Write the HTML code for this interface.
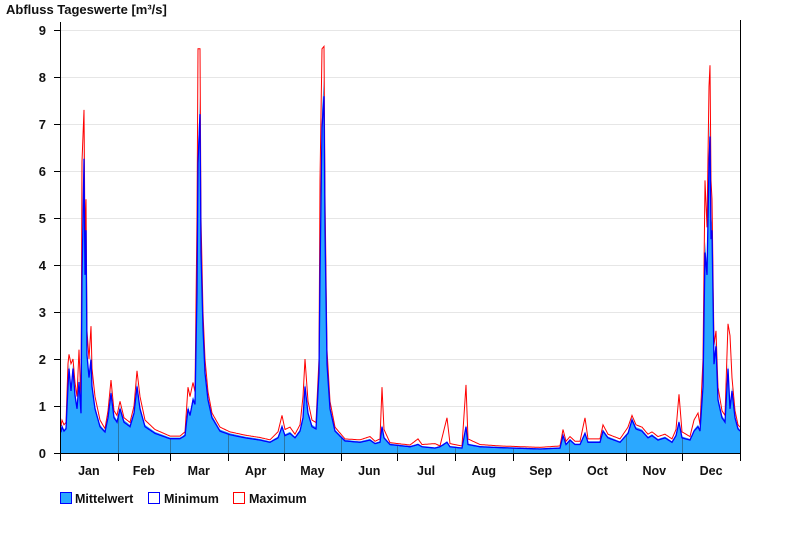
<!DOCTYPE html>
<html><head><meta charset="utf-8"><style>
html,body{margin:0;padding:0;background:#fff;width:800px;height:550px;overflow:hidden}
svg{display:block}
text{font-family:"Liberation Sans",Arial,sans-serif;font-weight:bold;fill:#111}
</style></head><body>
<svg id="s" width="800" height="550" xmlns="http://www.w3.org/2000/svg">
<text x="6" y="14" font-size="13">Abfluss Tageswerte [m³/s]</text>
<g id="grid"></g>
<path id="fill" fill="#2ba8ff" stroke="none"/>
<g id="mlines"></g>
<path id="mx" fill="none" stroke="#ff0000" stroke-width="1"/>
<path id="mn" fill="none" stroke="#0000ff" stroke-width="1.3"/>
<line x1="60.5" y1="22" x2="60.5" y2="461" stroke="#000"/>
<line x1="740.5" y1="20" x2="740.5" y2="454" stroke="#000"/>
<line x1="60" y1="453.5" x2="741" y2="453.5" stroke="#000"/>
<g id="ax"></g>
<rect x="60.5" y="492.5" width="11" height="11" fill="#2ba8ff" stroke="#0000ff"/>
<text x="75" y="503" font-size="12.5">Mittelwert</text>
<rect x="148.5" y="492.5" width="11" height="11" fill="#fff" stroke="#0000ff"/>
<text x="164" y="503" font-size="12.5">Minimum</text>
<rect x="233.5" y="492.5" width="11" height="11" fill="#fff" stroke="#ff0000"/>
<text x="249" y="503" font-size="12.5">Maximum</text>
</svg>
<script>
var NS="http://www.w3.org/2000/svg";
function el(t,a,p,txt){var e=document.createElementNS(NS,t);for(var k in a)e.setAttribute(k,a[k]);if(txt)e.textContent=txt;document.getElementById(p).appendChild(e);}
function Y(v){return 453-v*47;}
for(var i=0;i<=9;i++){
 if(i>0)el("line",{x1:61,x2:740,y1:Y(i)+.5,y2:Y(i)+.5,stroke:"#e6e6e6"},"grid");
 el("line",{x1:54,x2:60,y1:Y(i)+.5,y2:Y(i)+.5,stroke:"#000"},"ax");
 el("text",{x:46,y:Y(i)+5,"font-size":13,"text-anchor":"end"},"ax",""+i);
}
var P=[[60,.35,.45],[62,.6,.7],[64,.5,.6],[66,.55,.65],[68,1.5,1.9],[69,1.9,2.1],[71,1.4,1.9],[73,1.9,2.0],[75,1.3,1.5],[77,1.0,1.2],[79,1.6,2.2],[81,.9,1.1],[82,3.9,6.2],[84,6.6,7.3],[85,4.0,4.5],[86,5.0,5.4],[87,2.2,2.6],[89,1.7,2.0],[91,2.1,2.7],[92,1.5,1.8],[95,1.0,1.2],[100,.6,.7],[105,.48,.52],[108,.8,.9],[111,1.35,1.55],[114,.8,.9],[117,.7,.8],[120,1.0,1.1],[124,.7,.75],[130,.6,.65],[134,.9,1.0],[137,1.5,1.75],[140,1.0,1.2],[145,.6,.7],[155,.45,.5],[170,.33,.36],[180,.33,.36],[185,.4,.45],[188,1.0,1.4],[190,.85,1.2],[193,1.2,1.5],[195,1.1,1.3],[197,3.6,5],[198,6.5,8.6],[200,7.6,8.6],[201,4.5,5.0],[203,2.8,3.0],[205,1.8,2.0],[208,1.2,1.3],[212,.8,.85],[220,.5,.55],[230,.42,.45],[245,.35,.38],[260,.3,.33],[270,.25,.28],[278,.35,.45],[282,.6,.8],[285,.4,.5],[290,.45,.55],[295,.35,.4],[300,.5,.6],[303,.8,1.2],[305,1.5,2.0],[308,.9,1.1],[312,.6,.7],[316,.55,.65],[319,1.8,2.0],[320,4.0,5.8],[322,7.3,8.6],[324,8.0,8.65],[325,5.0,5.5],[327,2.0,2.2],[330,1.0,1.1],[335,.5,.55],[345,.28,.3],[360,.25,.28],[370,.3,.35],[375,.22,.25],[380,.25,.3],[382,.6,1.4],[384,.35,.5],[390,.2,.22],[410,.15,.17],[418,.2,.3],[422,.15,.18],[435,.12,.2],[440,.15,.15],[447,.25,.75],[450,.15,.2],[462,.12,.15],[466,.6,1.45],[468,.2,.3],[480,.15,.18],[500,.13,.15],[540,.1,.12],[560,.12,.15],[563,.4,.5],[566,.2,.25],[570,.3,.35],[575,.2,.25],[580,.2,.25],[585,.45,.75],[588,.25,.3],[600,.25,.3],[603,.5,.6],[608,.35,.4],[620,.25,.3],[628,.45,.55],[632,.75,.8],[636,.55,.6],[642,.5,.55],[648,.35,.4],[652,.4,.45],[658,.3,.35],[665,.35,.4],[672,.25,.3],[676,.4,.5],[679,.7,1.25],[682,.35,.45],[690,.3,.35],[694,.5,.7],[698,.6,.85],[700,.5,.6],[703,1.5,2.0],[705,4.5,5.8],[707,4.0,4.8],[709,6.5,7.8],[710,7.1,8.25],[711,4.8,5.8],[712,5.0,5.4],[714,2.0,2.3],[716,2.4,2.6],[718,1.2,1.4],[722,.8,.9],[725,.7,.8],[727,1.5,2.1],[728,1.9,2.75],[730,1.0,2.5],[732,1.4,1.6],[735,.8,.9],[738,.55,.6],[740,.5,.55]];
function I(x,k){for(var i=0;i<P.length-1;i++){var a=P[i],b=P[i+1];if(x>=a[0]&&x<=b[0])return a[k]+(b[k]-a[k])*(x-a[0])/(b[0]-a[0]);}return P[P.length-1][k];}
var days=[0,31,59,90,120,151,181,212,243,273,304,334,365];
var names=["Jan","Feb","Mar","Apr","May","Jun","Jul","Aug","Sep","Oct","Nov","Dec"];
function DX(d){return 60+d*680/365;}
for(var m=0;m<13;m++){
 var x=Math.round(DX(days[m]))+.5;
 el("line",{x1:x,x2:x,y1:453,y2:461,stroke:"#000"},"ax");
 if(m>0&&m<12)el("line",{x1:x,x2:x,y1:Y(I(x,1)*0.95),y2:453,stroke:"#2a6a90","stroke-width":.8},"mlines");
 if(m<12)el("text",{x:(DX(days[m])+DX(days[m+1]))/2,y:475,"font-size":12.5,"text-anchor":"middle"},"ax",names[m]);
}
var mean=[],mx=[],mn=[];
for(var x=61;x<=740;x++){var m=I(x,1);mean.push([x,m]);mx.push([x,I(x,2)]);mn.push([x,m*0.95-0.01]);}
function path(a){var d="";for(var i=0;i<a.length;i++){d+=(i?"L":"M")+a[i][0]+" "+Y(a[i][1]).toFixed(1);}return d;}
document.getElementById("fill").setAttribute("d","M61 453"+path(mean).replace("M","L")+"L740 453Z");
document.getElementById("mx").setAttribute("d",path(mx));
document.getElementById("mn").setAttribute("d",path(mn));
</script>
</body></html>
